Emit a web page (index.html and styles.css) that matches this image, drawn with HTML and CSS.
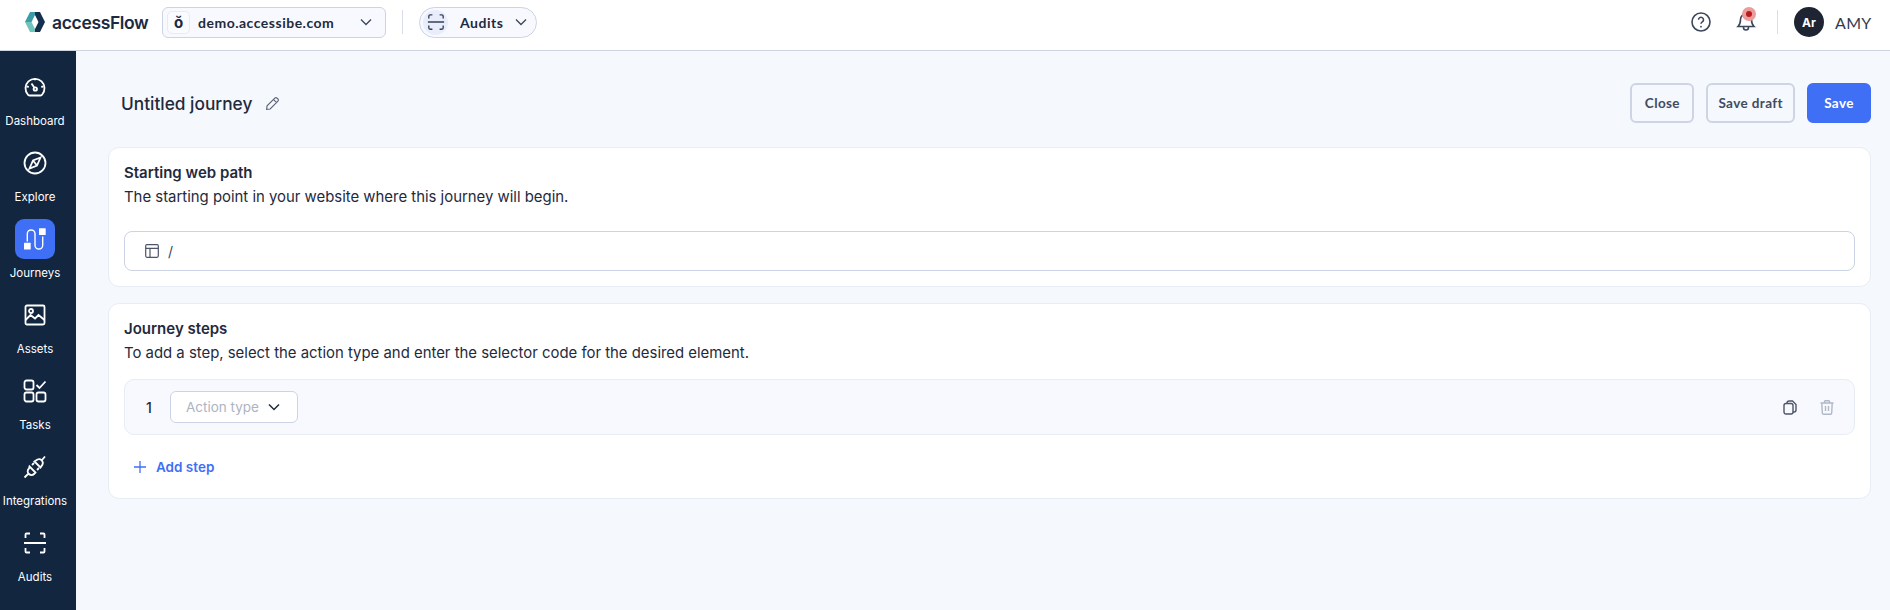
FILE: index.html
```html
<!DOCTYPE html>
<html lang="en">
<head>
<meta charset="utf-8">
<title>accessFlow</title>
<link rel="stylesheet" href="styles.css">
</head>
<body>
<header class="topbar">
  <div class="brand">
    <svg class="brand-mark" viewBox="0 0 20 20"><path fill="#3a9ca6" d="M5 0H10V3L6.500 10H0z"/><path fill="#6fc4bb" d="M0 10H6.500L10 17V20H5z"/><path fill="#15304c" d="M15 0H10V3L13.500 10 10 17V20H15L20 10z"/></svg>
    <span class="brand-name">accessFlow</span>
  </div>
  <button class="domain">
    <span class="domain-icon"><span class="domain-glyph">ŏ</span></span>
    <span class="domain-name">demo.accessibe.com</span>
    <svg class="chev" viewBox="0 0 12 8"><path d="M1 1.500 6 6.500l5-5"/></svg>
  </button>
  <span class="vr vr-left"></span>
  <button class="module">
    <span class="module-icon">
      <svg viewBox="0 0 20 20" class="ic"><path d="M2 6V3.500A1.500 1.500 0 0 1 3.500 2H6M14 2h2.500A1.500 1.500 0 0 1 18 3.500V6M2 14v2.500A1.500 1.500 0 0 0 3.500 18H6M14 18h2.500a1.500 1.500 0 0 0 1.500-1.500V14M1 10h18"/></svg>
    </span>
    <span class="module-name">Audits</span>
    <svg class="chev" viewBox="0 0 12 8"><path d="M1 1.500 6 6.500l5-5"/></svg>
  </button>
  <div class="top-right">
    <svg class="top-ic" viewBox="0 0 20 20"><circle cx="10" cy="10" r="9"/><path d="M7.500 7.800a2.500 2.500 0 1 1 3.800 2.100c-.8.500-1.300 1-1.300 1.900"/><circle class="dot" cx="10" cy="14.700" r=".9"/></svg>
    <span class="bell">
      <svg class="top-ic" viewBox="0 0 20 20"><path d="M10 2a5.500 5.500 0 0 0-5.500 5.500c0 4-1 5.500-2.500 7h16c-1.500-1.500-2.500-3-2.500-7A5.500 5.500 0 0 0 10 2zM7.500 14.500v1a2.500 2.500 0 0 0 5 0v-1"/></svg>
      <span class="bell-badge"></span>
    </span>
    <span class="vr"></span>
    <span class="avatar">Ar</span>
    <span class="user">AMY</span>
  </div>
</header>
<div class="shell">
  <nav class="sidenav">
    <a class="nav-item"><span class="nav-ic"><svg viewBox="0 0 24 24"><path d="M6.500 20.500h11a2 2 0 0 0 1.700-1A9.500 9.500 0 1 0 4.800 19.500a2 2 0 0 0 1.700 1zM12 3v2.200M3.800 11.500l2 .3M20.200 11.500l-2 .3M8.500 8.500l2.700 4"/><circle cx="12.300" cy="14" r="1.700"/></svg></span><span class="nav-label">Dashboard</span></a>
    <a class="nav-item"><span class="nav-ic"><svg viewBox="0 0 24 24"><circle cx="12" cy="12" r="10.500"/><path d="M17.500 6.500 10 9.500 6.500 17.500 14 14.500zM10 9.500l4 5"/></svg></span><span class="nav-label">Explore</span></a>
    <a class="nav-item active"><span class="nav-ic"><svg viewBox="0 0 24 24"><path d="M4.300 14.500V6.800a3.850 3.850 0 0 1 7.700 0v11.400a3.850 3.850 0 0 0 7.700 0V9.500" class="thin"/><rect class="solid" x="1" y="15.700" width="6.700" height="6.700" rx=".5"/><rect class="solid" x="16" y="1.300" width="6.700" height="6.700" rx=".5"/></svg></span><span class="nav-label">Journeys</span></a>
    <a class="nav-item"><span class="nav-ic"><svg viewBox="0 0 24 24"><rect x="2.500" y="2.500" width="19" height="19" rx="1.500"/><circle cx="8" cy="8" r="2"/><path d="M2.500 17l5-5 4.500 3.500 3.500-3.500 6 5"/></svg></span><span class="nav-label">Assets</span></a>
    <a class="nav-item"><span class="nav-ic"><svg viewBox="0 0 24 24"><rect x="1.500" y="1.500" width="9" height="9" rx="2"/><rect x="1.500" y="13.500" width="9" height="9" rx="2"/><rect x="13.500" y="13.500" width="9" height="9" rx="2"/><path d="M13.500 6l3 3 6-6.500"/></svg></span><span class="nav-label">Tasks</span></a>
    <a class="nav-item"><span class="nav-ic"><svg viewBox="0 0 24 24"><path d="M1.500 22.500l4-4M6.500 11.500l6 6-1.500 1.500a3.500 3.500 0 0 1-5 0 3.500 3.500 0 0 1 0-5.500zM9 10l2-2M14 15l2-2M11.500 6.500l6 6 2-3a3.800 3.800 0 0 0-5-5zM19 5l3-3.500"/></svg></span><span class="nav-label">Integrations</span></a>
    <a class="nav-item"><span class="nav-ic"><svg viewBox="0 0 24 24"><path d="M2.500 7V3.500a1 1 0 0 1 1-1H7M17 2.500h3.500a1 1 0 0 1 1 1V7M2.500 17v3.500a1 1 0 0 0 1 1H7M17 21.500h3.500a1 1 0 0 0 1-1V17M1 12h22"/></svg></span><span class="nav-label">Audits</span></a>
  </nav>
  <main class="page">
    <div class="toolbar">
      <div class="title-wrap">
        <h1 class="title">Untitled journey</h1>
        <svg class="pencil" viewBox="0 0 16 16"><path d="M10.500 2.200a1.600 1.600 0 0 1 2.300 0l1 1a1.600 1.600 0 0 1 0 2.300L5.500 13.800 1.700 14.300l.5-3.800zM9 3.700l3.300 3.300"/></svg>
      </div>
      <div class="actions">
        <button class="btn">Close</button>
        <button class="btn">Save draft</button>
        <button class="btn primary">Save</button>
      </div>
    </div>
    <section class="card">
      <h2 class="card-title">Starting web path</h2>
      <p class="card-desc">The starting point in your website where this journey will begin.</p>
      <div class="path-input">
        <svg class="path-ic" viewBox="0 0 14 14"><rect x=".7" y=".7" width="12.600" height="12.600" rx="1.200"/><path d="M.7 4.300h12.600M5 4.300v9"/></svg>
        <span class="path-val">/</span>
      </div>
    </section>
    <section class="card">
      <h2 class="card-title">Journey steps</h2>
      <p class="card-desc">To add a step, select the action type and enter the selector code for the desired element.</p>
      <div class="step">
        <span class="step-num">1</span>
        <button class="action-select"><span>Action type</span><svg class="chev dark" viewBox="0 0 12 8"><path d="M1 1.500 6 6.500l5-5"/></svg></button>
        <span class="step-tools">
          <svg class="tool" viewBox="0 0 14 15"><path d="M4 3.500V3A2 2 0 0 1 6 1h3.500L13 4.500V10a2 2 0 0 1-2 2h-1"/><rect x="1" y="3.500" width="9" height="10.500" rx="2"/></svg>
          <svg class="tool muted" viewBox="0 0 14 15"><path d="M.5 3h13M4.500 3V1.500a.8.800 0 0 1 .8-.8h3.400a.8.800 0 0 1 .8.800V3M1.800 3l.5 10a1.300 1.300 0 0 0 1.300 1.200h6.800a1.300 1.300 0 0 0 1.300-1.200l.5-10M5.500 6v5M8.500 6v5"/></svg>
        </span>
      </div>
      <a class="add-step"><svg class="plus" viewBox="0 0 12 12"><path d="M6 0v12M0 6h12"/></svg><span>Add step</span></a>
    </section>
  </main>
</div>
</body>
</html>
```
FILE: styles.css
```css
* { box-sizing: border-box; }
html, body { margin: 0; height: 100%; }
body { font-family: Inter, "Liberation Sans", sans-serif; color: #1f2a3d; background: #f5f8fc; overflow: hidden; display: flex; flex-direction: column; }
button { font-family: inherit; cursor: pointer; padding: 0; }
h1, h2, p { margin: 0; }

.topbar { height: 51px; flex: none; background: #fff; border-bottom: 1px solid #cdd5e5; display: flex; align-items: center; padding: 0 19px 6px 25px; }
.brand { display: flex; align-items: center; gap: 7px; width: 137px; }
.brand-mark { width: 20px; height: 20px; flex: none; }
.brand-name { font-family: Inter, sans-serif; font-size: 17.500px; font-weight: 600; letter-spacing: -.35px; color: #1b2a42; }
.domain { width: 224px; height: 31px; display: flex; align-items: center; background: #f8f9ff; border: 1px solid #ccd3e6; border-radius: 6px; padding: 0 13px 0 4px; }
.domain-icon { width: 23px; height: 23px; border: 1px solid #e8ebf5; border-radius: 5px; background: #fafbff; display: flex; align-items: center; justify-content: center; }
.domain-glyph { font-size: 15px; font-weight: 700; color: #1b2a42; line-height: 1; }
.domain-name { font-family: Lato, sans-serif; font-size: 14px; font-weight: 700; letter-spacing: .5px; color: #1f2a3d; margin-left: 8px; flex: 1; text-align: left; }
.chev { width: 12px; height: 8px; fill: none; stroke: #3c465a; stroke-width: 1.300; }
.chev.dark { stroke: #1f2a3d; stroke-width: 1.500; }
.vr { width: 1px; height: 24px; background: #d8dde8; flex: none; }
.vr-left { margin: 0 16px; }
.module { width: 118px; height: 31px; display: flex; align-items: center; background: #f8f9ff; border: 1px solid #ccd3e6; border-radius: 16px; padding: 0 9px 0 3px; }
.module-icon { width: 25px; height: 25px; border-radius: 50%; background: #e9edfa; display: flex; align-items: center; justify-content: center; }
.ic { width: 18px; height: 18px; fill: none; stroke: #33415a; stroke-width: 1.500; }
.module-name { font-family: Lato, sans-serif; font-size: 14px; font-weight: 700; letter-spacing: .5px; margin-left: 12px; flex: 1; text-align: left; color: #1f2a3d; }

.top-right { margin-left: auto; display: flex; align-items: center; }
.top-ic { width: 20px; height: 20px; fill: none; stroke: #3c465a; stroke-width: 1.600; display: block; }
.top-ic .dot { fill: #3c465a; stroke: none; }
.bell { position: relative; margin-left: 25px; }
.bell-badge { position: absolute; right: 0; top: -5px; width: 14px; height: 14px; border-radius: 50%; background: #b81c1c; border: 4px solid #eb9c9c; }
.top-right .vr { margin: 0 16px 0 21px; }
.avatar { width: 30px; height: 30px; border-radius: 50%; background: #1f2433; color: #fff; font-size: 12px; font-weight: 700; display: flex; align-items: center; justify-content: center; }
.user { font-family: Lato, sans-serif; font-size: 16px; color: #333b4f; margin-left: 11px; width: 36px; letter-spacing: .3px; white-space: nowrap; }

.shell { flex: 1; display: flex; min-height: 0; }
.sidenav { width: 76px; flex: none; background: #12263f; padding: 12px 6px 0 0; }
.nav-item { height: 76px; padding-top: 4px; display: flex; flex-direction: column; align-items: center; color: #fff; }
.nav-ic { width: 40px; height: 40px; border-radius: 9px; display: flex; align-items: center; justify-content: center; }
.nav-ic svg { width: 24px; height: 24px; fill: none; stroke: #fff; stroke-width: 1.800; }
.nav-ic .solid { fill: #fff; stroke: none; }
.nav-ic .thin { stroke-width: 1.400; }
.nav-item.active .nav-ic { background: #3f6ff5; }
.nav-label { font-family: Inter, sans-serif; font-size: 11.500px; line-height: 18px; margin-top: 5px; white-space: nowrap; }

.page { flex: 1; min-width: 0; padding: 32px 19px 0 32px; }
.toolbar { display: flex; align-items: center; justify-content: space-between; padding-left: 13px; margin-bottom: 24px; }
.title-wrap { display: flex; align-items: center; gap: 13px; }
.title { font-family: Inter, sans-serif; font-size: 17.300px; font-weight: 500; color: #1f2a3d; }
.pencil { width: 15px; height: 15px; fill: none; stroke: #5a6376; stroke-width: 1.200; }
.actions { display: flex; gap: 12px; }
.btn { height: 40px; padding: 0 10px; border: 2px solid #cdd4e4; border-radius: 6px; background: #f5f8fc; font-family: Lato, sans-serif; font-size: 13.500px; font-weight: 700; letter-spacing: .4px; color: #414b5f; min-width: 64px; }
.btn.primary { background: #3f6ff5; border-color: #3f6ff5; color: #fff; }

.card { background: #fff; border: 1px solid #e8ecf4; border-radius: 11px; padding: 15px; margin-bottom: 16px; }
.card-title { font-size: 15px; line-height: 20px; font-weight: 600; color: #1f2a3d; }
.card-desc { font-size: 14.900px; line-height: 24px; margin-top: 2px; color: #1f2a3d; }
.path-input { height: 40px; margin-top: 22px; border: 1px solid #ccd3e6; border-radius: 8px; display: flex; align-items: center; padding-left: 20px; }
.path-ic { width: 14px; height: 14px; fill: none; stroke: #4d5668; stroke-width: 1.200; }
.path-val { margin-left: 9px; font-size: 14px; color: #3c465a; }

.step { height: 56px; margin-top: 14px; background: #f8f9fe; border: 1px solid #e8ecf4; border-radius: 10px; display: flex; align-items: center; padding-left: 21px; }
.step-num { font-size: 14px; font-weight: 500; width: 24px; }
.action-select { width: 128px; height: 32px; display: flex; align-items: center; justify-content: space-between; padding: 0 17px 0 15px; background: #fff; border: 1px solid #ccd3e6; border-radius: 6px; font-size: 13.500px; color: #aeb3bf; }
.step-tools { margin-left: auto; display: flex; gap: 23px; padding-right: 20px; }
.tool { width: 14px; height: 15px; fill: none; stroke: #4d5668; stroke-width: 1.400; display: block; }
.tool.muted { stroke: #b0b8c6; }
.add-step { display: flex; align-items: center; gap: 10px; margin: 22px 0 6px 10px; height: 20px; color: #3f6ff5; font-size: 13.500px; font-weight: 600; }
.plus { width: 12px; height: 12px; fill: none; stroke: #3f6ff5; stroke-width: 1.300; }
```
